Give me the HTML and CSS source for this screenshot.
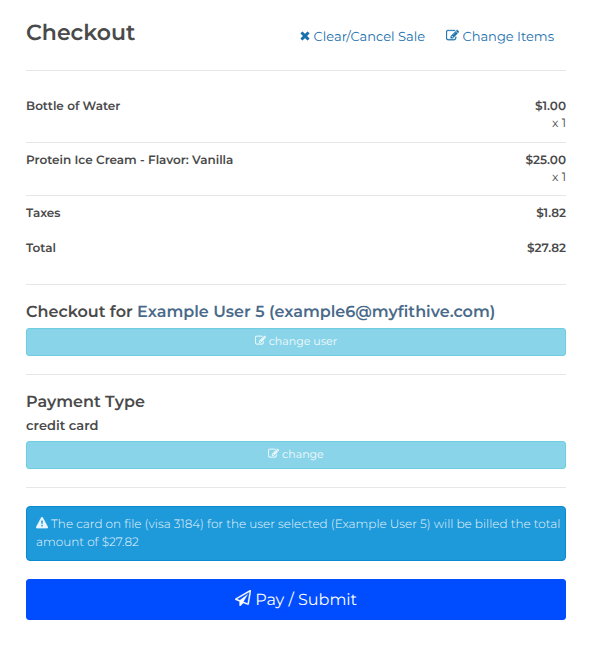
FILE: index.html
```
<!DOCTYPE html>
<html lang="en">

<head>
    <meta charset="UTF-8">
    <meta name="viewport" content="width=device-width, initial-scale=1.0">
    <title>Checkout</title>
    <link rel="stylesheet" href="styles.css">
</head>

<body>
    <!-- shared icons -->
    <svg class="icon-defs" aria-hidden="true">
        <symbol id="icon-times" viewBox="192 0 1408 1792">
            <path d="M1490 1322q0 40-28 68l-136 136q-28 28-68 28t-68-28l-294-294-294 294q-28 28-68 28t-68-28l-136-136q-28-28-28-68t28-68l294-294-294-294q-28-28-28-68t28-68l136-136q28-28 68-28t68 28l294 294 294-294q28-28 68-28t68 28l136 136q28 28 28 68t-28 68l-294 294 294 294q28 28 28 68z"/>
        </symbol>
        <symbol id="icon-edit" viewBox="0 0 1792 1792">
            <path d="M888 1184l116-116-152-152-116 116v56h96v96h56zm440-720q-16-16-33 1l-350 350q-17 17-1 33t33-1l350-350q17-17 1-33zm80 594v190q0 119-84.500 203.500t-203.500 84.500h-832q-119 0-203.500-84.500t-84.500-203.500v-832q0-119 84.500-203.500t203.500-84.500h832q63 0 117 25 15 7 18 23 3 17-9 29l-49 49q-14 14-32 8-23-6-45-6h-832q-66 0-113 47t-47 113v832q0 66 47 113t113 47h832q66 0 113-47t47-113v-126q0-13 9-22l64-64q15-15 35-7t20 29zm-96-738l288 288-672 672h-288v-288zm444 132l-92 92-288-288 92-92q28-28 68-28t68 28l152 152q28 28 28 68t-28 68z"/>
        </symbol>
        <symbol id="icon-warning" viewBox="0 0 1792 1792">
            <path d="M1024 1375v-190q0-14-9.500-23.500t-22.500-9.500h-192q-13 0-22.500 9.500t-9.500 23.500v190q0 14 9.500 23.500t22.500 9.500h192q13 0 22.500-9.500t9.500-23.500zm-2-374l18-459q0-12-10-19-13-11-24-11h-220q-11 0-24 11-10 7-10 21l17 457q0 10 10 16.500t24 6.500h185q14 0 23.500-6.500t10.500-16.500zm-14-934l768 1408q35 63-2 126-17 29-46.500 46t-63.500 17h-1536q-34 0-63.500-17t-46.500-46q-37-63-2-126l768-1408q17-31 47-49t65-18 65 18 47 49z"/>
        </symbol>
        <symbol id="icon-plane" viewBox="0 0 1792 1792">
            <path d="M1764 11q33 24 27 64l-256 1536q-5 29-32 45-14 8-31 8-11 0-24-5l-527-215-298 327q-18 21-47 21-14 0-23-4-19-7-30-23.500t-11-36.500v-452l-472-193q-37-14-40-55-3-39 32-59l1664-960q35-21 68 2zm-342 1499l221-1323-1434 827 336 137 863-639-478 797z"/>
        </symbol>
    </svg>

    <main class="checkout">
        <header class="checkout-header">
            <h1>Checkout</h1>
            <nav class="actions">
                <a href="#"><svg class="icon icon-narrow"><use href="#icon-times"/></svg> Clear/Cancel Sale</a>
                <a href="#"><svg class="icon"><use href="#icon-edit"/></svg> Change Items</a>
            </nav>
        </header>

        <hr>

        <table class="items">
            <tbody>
                <tr>
                    <th scope="row">Bottle of Water</th>
                    <td><strong>$1.00</strong><br>x 1</td>
                </tr>
                <tr class="line">
                    <th scope="row">Protein Ice Cream - Flavor: Vanilla</th>
                    <td><strong>$25.00</strong><br>x 1</td>
                </tr>
                <tr class="line">
                    <th scope="row">Taxes</th>
                    <td><strong>$1.82</strong></td>
                </tr>
                <tr>
                    <th scope="row">Total</th>
                    <td><strong>$27.82</strong></td>
                </tr>
            </tbody>
        </table>

        <hr>

        <section>
            <h2>Checkout for <a class="user" href="#">Example User 5 (example6@myfithive.com)</a></h2>
            <button type="button" class="btn btn-change"><svg class="icon"><use href="#icon-edit"/></svg> change user</button>
        </section>

        <hr>

        <section>
            <h2>Payment Type</h2>
            <p class="payment">credit card</p>
            <button type="button" class="btn btn-change"><svg class="icon"><use href="#icon-edit"/></svg> change</button>
        </section>

        <hr>

        <p class="alert"><svg class="icon"><use href="#icon-warning"/></svg> The card on file (visa 3184) for the user selected (Example User 5) will be billed the total amount of $27.82</p>
        <button type="submit" class="btn btn-pay"><svg class="icon"><use href="#icon-plane"/></svg> Pay / Submit</button>
    </main>
</body>

</html>
```

FILE: styles.css
```
* {
    box-sizing: border-box;
}

body {
    margin: 0;
    background-color: #fff;
    color: #4a4a4a;
    font-family: Montserrat, Inter, sans-serif;
    font-size: 12px;
    line-height: 17px;
    text-rendering: geometricPrecision;
}

.checkout {
    padding: 19px 29px 33px 26px;
}

.icon-defs {
    display: none;
}

.icon {
    width: 1em;
    height: 1em;
    fill: currentColor;
    stroke: currentColor;
    stroke-width: 40px;
    vertical-align: -1px;
}

.icon-narrow {
    width: 10px;
}

.checkout-header {
    display: flex;
    justify-content: space-between;
    padding-right: 12px;
}

h1 {
    margin: 0;
    font-size: 22px;
    font-weight: 600;
    line-height: 28px;
}

.actions {
    display: flex;
    gap: 21px;
    padding-top: 10px;
}

.actions a {
    color: #1a70ad;
    font-size: 13px;
    text-decoration: none;
}

hr {
    margin: 18px 0;
    border: none;
    border-top: 1px solid #e7e7e7;
}

.checkout-header + hr {
    margin-top: 23px;
}

.items {
    width: 100%;
    border-collapse: collapse;
}

.items th,
.items td {
    padding: 9px 0;
    vertical-align: top;
}

.items tr:first-child > * {
    padding-bottom: 10px;
}

.items th {
    text-align: left;
    font-weight: 600;
}

.items td {
    text-align: right;
}

.items strong {
    font-weight: 600;
}

.items .line {
    border-top: 1px solid #e7e7e7;
}

h2 {
    margin: 0 0 5px;
    font-size: 16px;
    font-weight: 600;
    line-height: 20px;
}

.user {
    color: #4a6a8a;
    text-decoration: none;
}

.payment {
    margin: 0 0 6px;
    font-size: 13px;
    font-weight: 600;
}

.btn {
    display: block;
    width: 100%;
    border: 1px solid;
    border-radius: 3px;
    font-family: inherit;
    text-rendering: inherit;
    cursor: pointer;
}

.btn-change {
    padding: 3px 9px 5px;
    background-color: #89d4e9;
    border-color: #6fcde0;
    color: #f2fafd;
    font-size: 11px;
    line-height: 18px;
}

.alert {
    margin: 0 0 18px;
    padding: 9px 4px 8px 9px;
    background-color: #1e99da;
    border: 1px solid #0a8ad0;
    border-radius: 4px;
    color: #e9f5fb;
    font-size: 12px;
    font-weight: 300;
    line-height: 18px;
}

.btn-pay {
    padding: 9px 14px 7px;
    background-color: #004dff;
    border-color: #004dff;
    color: #fff;
    font-size: 16px;
    line-height: 23px;
}
```
